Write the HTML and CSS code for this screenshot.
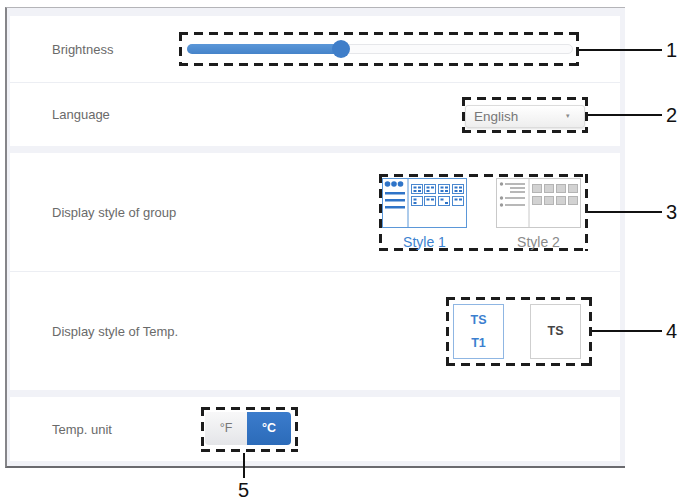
FILE: index.html
```html
<!DOCTYPE html>
<html lang="en">
<head>
<meta charset="utf-8">
<title>Settings</title>
<link rel="stylesheet" href="styles.css">
</head>
<body>
<div class="page">
  <div class="panel">
    <section class="card">
      <div class="row row-bright">
        <span class="label">Brightness</span>
        <div class="mark m1">
          <div class="slider">
            <div class="fill"></div>
            <div class="knob"></div>
          </div>
        </div>
      </div>
      <div class="sep"></div>
      <div class="row row-lang">
        <span class="label">Language</span>
        <div class="mark m2">
          <div class="select"><span class="sel-text">English</span><span class="caret">&#9662;</span></div>
        </div>
      </div>
    </section>

    <section class="card">
      <div class="row row-group">
        <span class="label">Display style of group</span>
        <div class="mark m3">
          <div class="opt">
            <div class="preview active">
              <svg width="83" height="48" viewBox="0 0 83 48">
                <line x1="25" y1="0" x2="25" y2="48" stroke="#5b97d8" stroke-width="1"/>
                <circle cx="4.5" cy="5" r="2.8" fill="#2f74c8"/>
                <circle cx="11" cy="5" r="2.8" fill="#2f74c8"/>
                <circle cx="17.5" cy="5" r="2.8" fill="#2f74c8"/>
                <rect x="2" y="13" width="20" height="2.5" fill="#2f74c8"/>
                <rect x="2" y="20" width="20" height="2.5" fill="#2f74c8"/>
                <rect x="2" y="27" width="20" height="2.5" fill="#2f74c8"/>
                <g fill="none" stroke="#4a88d0" stroke-width="1">
                  <rect x="28.5" y="5.5" width="11" height="9"/>
                  <rect x="41.5" y="5.5" width="11" height="9"/>
                  <rect x="55.5" y="5.5" width="11" height="9"/>
                  <rect x="69.5" y="5.5" width="11" height="9"/>
                  <rect x="28.5" y="17.5" width="11" height="9"/>
                  <rect x="41.5" y="17.5" width="11" height="9"/>
                  <rect x="55.5" y="17.5" width="11" height="9"/>
                  <rect x="69.5" y="17.5" width="11" height="9"/>
                </g>
                <g fill="#2f74c8">
                  <rect x="30.5" y="7.5" width="3" height="2"/><rect x="35" y="7.5" width="3" height="2"/>
                  <rect x="30.5" y="11" width="3" height="2"/><rect x="35" y="11" width="3" height="2"/>
                  <rect x="43.5" y="7.5" width="3" height="2"/><rect x="48" y="7.5" width="3" height="2"/>
                  <rect x="43.5" y="11" width="3" height="2"/>
                  <rect x="57.5" y="7.5" width="3" height="2"/><rect x="62" y="7.5" width="3" height="2"/>
                  <rect x="57.5" y="11" width="3" height="2"/><rect x="62" y="11" width="3" height="2"/>
                  <rect x="71.5" y="7.5" width="3" height="2"/><rect x="76" y="7.5" width="3" height="2"/>
                  <rect x="71.5" y="11" width="3" height="2"/><rect x="76" y="11" width="3" height="2"/>
                  <rect x="30.5" y="19.5" width="3" height="2"/><rect x="30.5" y="23" width="3" height="2"/>
                  <rect x="43.5" y="19.5" width="3" height="2"/><rect x="48" y="19.5" width="3" height="2"/>
                  <rect x="57.5" y="19.5" width="3" height="2"/><rect x="62" y="23" width="3" height="2"/>
                  <rect x="71.5" y="19.5" width="3" height="2"/><rect x="76" y="19.5" width="3" height="2"/>
                </g>
              </svg>
            </div>
            <span class="opt-name active-name">Style 1</span>
          </div>
          <div class="opt">
            <div class="preview">
              <svg width="83" height="48" viewBox="0 0 83 48">
                <line x1="32" y1="0" x2="32" y2="48" stroke="#c8c8c8" stroke-width="1"/>
                <g fill="#9a9a9a">
                  <circle cx="4.5" cy="5" r="1.7"/>
                  <circle cx="4.5" cy="19" r="1.7"/>
                  <circle cx="4.5" cy="26" r="1.7"/>
                </g>
                <g stroke="#9a9a9a" stroke-width="1.4">
                  <line x1="8" y1="5" x2="28" y2="5"/>
                  <line x1="13" y1="9" x2="28" y2="9"/>
                  <line x1="13" y1="13" x2="28" y2="13"/>
                  <line x1="8" y1="19" x2="28" y2="19"/>
                  <line x1="8" y1="26" x2="28" y2="26"/>
                </g>
                <g fill="#d2d2d2" stroke="#b4b4b4" stroke-width="1">
                  <rect x="35.5" y="5.5" width="9" height="8"/>
                  <rect x="47.5" y="5.5" width="9" height="8"/>
                  <rect x="59.5" y="5.5" width="9" height="8"/>
                  <rect x="71.5" y="5.5" width="9" height="8"/>
                  <rect x="35.5" y="17.5" width="9" height="8"/>
                  <rect x="47.5" y="17.5" width="9" height="8"/>
                  <rect x="59.5" y="17.5" width="9" height="8"/>
                  <rect x="71.5" y="17.5" width="9" height="8"/>
                </g>
              </svg>
            </div>
            <span class="opt-name">Style 2</span>
          </div>
        </div>
      </div>
      <div class="sep"></div>
      <div class="row row-temp">
        <span class="label">Display style of Temp.</span>
        <div class="mark m4">
          <div class="tbox tactive"><span>TS</span><span>T1</span></div>
          <div class="tbox"><span>TS</span></div>
        </div>
      </div>
    </section>

    <section class="card">
      <div class="row row-unit">
        <span class="label">Temp. unit</span>
        <div class="mark m5">
          <div class="seg">
            <span class="seg-f">&deg;F</span>
            <span class="seg-c">&deg;C</span>
          </div>
        </div>
      </div>
    </section>
  </div>

  <div class="leader h l1"></div><span class="num n1">1</span>
  <div class="leader h l2"></div><span class="num n2">2</span>
  <div class="leader h l3"></div><span class="num n3">3</span>
  <div class="leader h l4"></div><span class="num n4">4</span>
  <div class="leader v l5"></div><span class="num n5">5</span>
</div>
</body>
</html>
```

FILE: styles.css
```css
* { box-sizing: border-box; }

html, body {
  margin: 0;
  padding: 0;
  background: #ffffff;
}

body {
  font-family: "Liberation Sans", Arial, sans-serif;
  width: 685px;
  height: 500px;
  overflow: hidden;
}

.page {
  position: relative;
  width: 685px;
  height: 500px;
  padding-top: 7px;
  padding-left: 5px;
}

.panel {
  width: 620px;
  background: #f1f2f7;
  border-top: 1px solid #b4b4b8;
  border-left: 2px solid #858589;
  border-bottom: 2px solid #6a6a6e;
  padding: 8px 5px 5px 3px;
  display: flex;
  flex-direction: column;
  gap: 7px;
}

.card {
  background: #ffffff;
  display: flex;
  flex-direction: column;
}

.sep {
  height: 1px;
  background: #eceef3;
}

.row {
  display: flex;
  align-items: center;
  padding-left: 42px;
}

.label {
  font-size: 13px;
  color: #6a6a6a;
  white-space: nowrap;
}

/* dashed callout frame: long dashes drawn with gradients */
.mark {
  display: flex;
  border: 3px solid transparent;
  background:
    repeating-linear-gradient(90deg, #1c1c1c 0 9px, transparent 9px 15px) top left / 100% 3px no-repeat border-box,
    repeating-linear-gradient(90deg, #1c1c1c 0 9px, transparent 9px 15px) bottom left / 100% 3px no-repeat border-box,
    repeating-linear-gradient(180deg, #1c1c1c 0 9px, transparent 9px 15px) top left / 3px 100% no-repeat border-box,
    repeating-linear-gradient(180deg, #1c1c1c 0 9px, transparent 9px 15px) top right / 3px 100% no-repeat border-box;
  background-origin: border-box;
}

/* Row 1: brightness */
.row-bright { height: 66px; }
.row-bright .label { width: 127px; }
.m1 {
  width: 400px;
  height: 34px;
  align-items: center;
  padding-left: 5px;
}
.slider {
  position: relative;
  width: 386px;
  height: 10px;
  border: 1px solid #e6e7ea;
  border-radius: 5px;
  background: #fbfbfc;
}
.fill {
  width: 155px;
  height: 10px;
  margin-top: -1px;
  margin-left: -1px;
  border-radius: 5px;
  background: linear-gradient(#5b97d8, #4583c9);
}
.knob {
  position: absolute;
  left: 144px;
  top: -5px;
  width: 18px;
  height: 18px;
  border-radius: 50%;
  background: #3f7ec9;
}

/* Row 2: language */
.row-lang {
  height: 63px;
  justify-content: space-between;
  padding-right: 32px;
}
.m2 {
  width: 126px;
  height: 36px;
  align-items: center;
}
.select {
  width: 121px;
  height: 23px;
  margin-top: 3px;
  border: 1px solid #dcdcdc;
  border-radius: 3px;
  background: linear-gradient(#ffffff, #eeeeee);
  box-shadow: 0 1px 2px rgba(0, 0, 0, 0.12);
  display: flex;
  align-items: center;
  justify-content: space-between;
  padding: 0 14px 0 8px;
}
.sel-text {
  font-size: 13.5px;
  color: #777777;
}
.caret {
  font-size: 7px;
  color: #8a8a8a;
}

/* Row 3: group style */
.row-group {
  height: 118px;
  justify-content: space-between;
  padding-right: 32px;
}
.m3 {
  width: 209px;
  height: 77px;
  padding: 1px 4px 0 0;
  gap: 29px;
}
.opt {
  display: flex;
  flex-direction: column;
  align-items: center;
}
.preview {
  width: 85px;
  height: 50px;
  border: 1px solid #c9c9c9;
  display: flex;
}
.preview.active {
  border-color: #5b97d8;
}
.preview svg { display: block; }
.opt-name {
  margin-top: 6px;
  font-size: 14px;
  color: #8a8a8a;
}
.opt-name.active-name {
  color: #3d82d0;
}

/* Row 4: temp display */
.row-temp {
  height: 118px;
  justify-content: space-between;
  padding-right: 28px;
}
.m4 {
  width: 146px;
  height: 69px;
  padding: 4px 0 0 4px;
  gap: 26px;
}
.tbox {
  width: 51px;
  height: 55px;
  border: 1px solid #cfcfcf;
  display: flex;
  flex-direction: column;
  align-items: center;
  justify-content: center;
  font-size: 12.5px;
  font-weight: bold;
  color: #444444;
}
.tbox.tactive {
  border-color: #8fb6e3;
  color: #3b7fcf;
  justify-content: space-between;
  padding: 8px 0 8px;
}

/* Row 5: temp unit */
.row-unit { height: 64px; }
.row-unit .label { width: 149px; }
.m5 {
  width: 97px;
  height: 45px;
  padding: 2px 0 0 1px;
}
.seg {
  display: flex;
  height: 33px;
  border-radius: 4px;
  overflow: hidden;
}
.seg-f, .seg-c {
  display: flex;
  align-items: center;
  justify-content: center;
  font-size: 12.5px;
}
.seg-f {
  width: 42px;
  background: linear-gradient(#f8f8f9, #e4e5e8);
  color: #777777;
}
.seg-c {
  width: 44px;
  background: linear-gradient(#3b7ccc, #2c6bb9);
  color: #ffffff;
  font-weight: bold;
}

/* Annotation callouts (overlay) */
.leader {
  position: absolute;
  background: #111111;
}
.leader.h { height: 2px; }
.leader.v { width: 2px; }
.l1 { left: 579px; top: 49px; width: 83px; }
.l2 { left: 588px; top: 114px; width: 74px; }
.l3 { left: 588px; top: 211px; width: 74px; }
.l4 { left: 592px; top: 330px; width: 70px; }
.l5 { left: 243px; top: 453px; height: 25px; }

.num {
  position: absolute;
  font-size: 20px;
  line-height: 20px;
  color: #111111;
}
.n1 { left: 666px; top: 40px; }
.n2 { left: 666px; top: 105px; }
.n3 { left: 666px; top: 202px; }
.n4 { left: 666px; top: 321px; }
.n5 { left: 238px; top: 480px; }
```
